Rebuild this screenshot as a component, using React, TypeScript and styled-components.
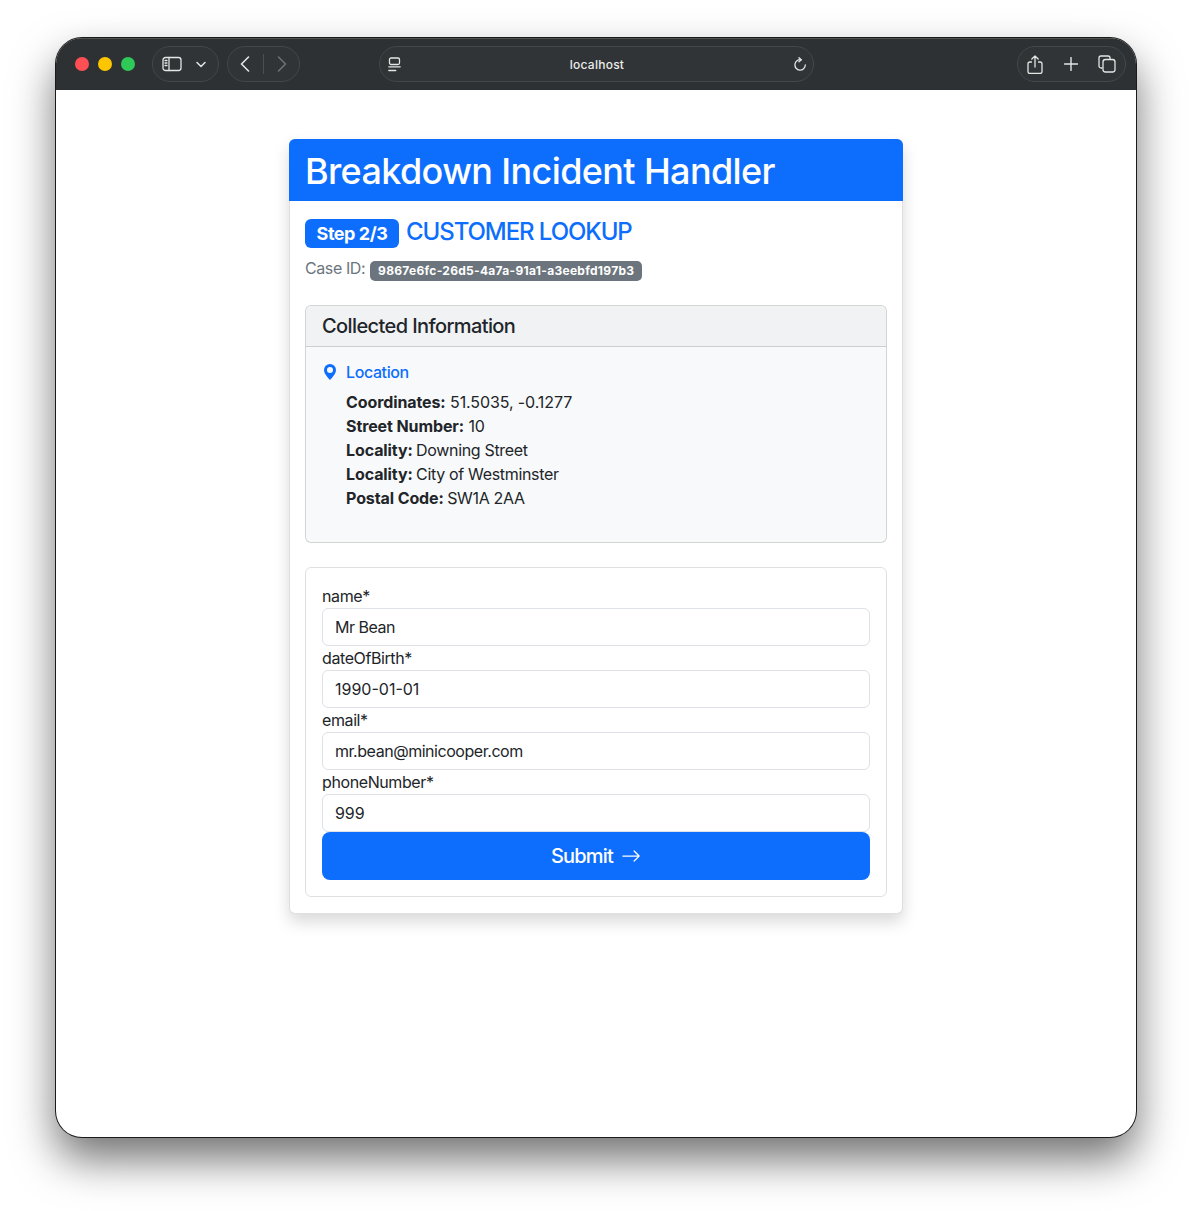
import React from "react";
import styled, { createGlobalStyle } from "styled-components";
import { BsArrowRight, BsGeoAltFill } from "react-icons/bs";

const Global = createGlobalStyle`
  html, body { margin: 0; padding: 0; background: #fff; overflow: hidden; }
  body { font-family: Inter, "Liberation Sans", sans-serif; color: #212529; font-size: 16px; line-height: 24px; }
  * { box-sizing: border-box; }
`;

const Stage = styled.div`
  width: 1192px;
  height: 1211px;
  padding: 38px 56px 74px;
`;
const Win = styled.div`
  width: 1080px;
  height: 1099px;
  border-radius: 26px;
  overflow: hidden;
  background: #fff;
  box-shadow: 0 0 0 1px #1a1a1a, 0 22px 44px rgba(0, 0, 0, 0.56);
  display: flex;
  flex-direction: column;
`;
const Toolbar = styled.div`
  height: 52px;
  flex: none;
  background: #2d3133;
  display: flex;
  align-items: center;
  padding: 0 10px 0 19px;
  box-shadow: inset 0 1px 0 #50524f;
`;
const Lights = styled.div`
  display: flex;
  gap: 9px;
  margin-right: 17px;
`;
const Light = styled.span<{ $c: string }>`
  width: 14px;
  height: 14px;
  border-radius: 50%;
  background: ${(p) => p.$c};
`;
const Pill = styled.div<{ $w: number; $ml?: number; $mr?: number }>`
  width: ${(p) => p.$w}px;
  height: 36px;
  margin-left: ${(p) => p.$ml ?? 0}px;
  margin-right: ${(p) => p.$mr ?? 0}px;
  border: 1px solid #44484a;
  border-radius: 18px;
  background: #303436;
  display: flex;
  align-items: center;
  flex: none;
`;
const SidebarPill = styled(Pill)`
  padding: 0 12px 0 9px;
  justify-content: space-between;
`;
const NavPill = styled(Pill)`
  padding: 0 12px;
  justify-content: space-between;
`;
const Divider = styled.span`
  width: 1px;
  height: 20px;
  background: #4b4f51;
`;
const AddressPill = styled(Pill)`
  padding: 0 6px 0 8px;
  justify-content: space-between;
`;
const Host = styled.span`
  font-size: 12px;
  font-weight: 500;
  color: #eceded;
  line-height: 16px;
  padding-top: 1px;
  letter-spacing: 0.25px;
`;
const ActionPill = styled(Pill)`
  padding: 0 9px 0 9px;
  justify-content: space-between;
  margin-left: auto;
`;

const Glyph = styled.svg<{ $dim?: boolean }>`
  display: block;
  flex: none;
  fill: none;
  stroke: ${(p) => (p.$dim ? "#6e7173" : "#e4e5e5")};
  stroke-width: 1.3;
  stroke-linecap: round;
  stroke-linejoin: round;
`;

const Content = styled.main`
  flex: 1;
  padding-top: 49px;
  display: flex;
  justify-content: center;
  align-items: flex-start;
`;
const Card = styled.section`
  width: 614px;
  background: #fff;
  border: 1px solid rgba(0, 0, 0, 0.125);
  border-radius: 6px;
  box-shadow: 0 8px 16px rgba(0, 0, 0, 0.15);
`;
const CardHead = styled.header`
  height: 62px;
  margin: -1px -1px 0;
  padding: 11px 16px 0;
  border-radius: 6px 6px 0 0;
  background: #0d6efd;
`;
const Title = styled.h1`
  margin: 0;
  font-size: 36px;
  line-height: 43px;
  font-weight: 500;
  color: #fff;
  letter-spacing: -0.63px;
`;
const CardBody = styled.div`
  padding: 18px 15px 16px 15px;
`;
const StepRow = styled.div`
  display: flex;
  align-items: center;
  gap: 7px;
  height: 29px;
`;
const StepBadge = styled.span`
  height: 29px;
  width: 94px;
  border-radius: 6px;
  background: #0d6efd;
  color: #fff;
  font-size: 18px;
  font-weight: 700;
  line-height: 29px;
  text-align: center;
  letter-spacing: -0.45px;
`;
const StepName = styled.h4`
  margin: 0 0 4px;
  font-size: 24px;
  line-height: 29px;
  font-weight: 500;
  color: #0d6efd;
  letter-spacing: -1.08px;
`;
const CaseRow = styled.div`
  display: flex;
  align-items: flex-start;
  gap: 5px;
  margin-top: 8px;
  height: 49px;
  color: #6c757d;
  line-height: 24px;
`;
const CaseLabel = styled.span`
  letter-spacing: -0.4px;
`;
const CaseBadge = styled.span`
  margin-top: 5px;
  height: 20px;
  width: 272px;
  border-radius: 5px;
  background: #6c757d;
  color: #fff;
  font-size: 12px;
  font-weight: 700;
  line-height: 20px;
  text-align: center;
  white-space: nowrap;
  letter-spacing: 0.29px;
`;
const InfoPanel = styled.section`
  height: 238px;
  border: 1px solid rgba(0, 0, 0, 0.15);
  border-radius: 6px;
  background: #f8f9fa;
  overflow: hidden;
`;
const InfoHead = styled.div`
  height: 41px;
  padding: 8px 16px;
  background: #f1f2f4;
  border-bottom: 1px solid rgba(0, 0, 0, 0.15);
  font-size: 20px;
  line-height: 24px;
  font-weight: 500;
  letter-spacing: -0.6px;
`;
const InfoBody = styled.div`
  padding: 16px;
`;
const SectionLabel = styled.div`
  display: flex;
  align-items: center;
  height: 18px;
  margin-bottom: 9px;
  color: #0d6efd;
  font-weight: 500;
  letter-spacing: -0.4px;
  svg { margin: 0 8px 0 0; flex: none; }
`;
const Facts = styled.ul`
  list-style: none;
  margin: 0;
  padding: 0 0 0 24px;
`;
const Fact = styled.li`
  line-height: 24px;
  letter-spacing: -0.1px;
  b { font-weight: 700; }
`;
const Word = styled.span`
  margin-left: -1px;
  letter-spacing: -0.33px;
`;
const FormPanel = styled.form`
  margin-top: 24px;
  border: 1px solid rgba(0, 0, 0, 0.125);
  border-radius: 6px;
  padding: 16px;
`;
const Label = styled.label`
  display: block;
  line-height: 24px;
  letter-spacing: -0.4px;
`;
const Input = styled.input<{ $track: number }>`
  display: block;
  width: 100%;
  height: 38px;
  padding: 6px 12px;
  border: 1px solid #dee2e6;
  border-radius: 6px;
  background: #fff;
  color: #212529;
  font: 400 16px/24px Inter, "Liberation Sans", sans-serif;
  letter-spacing: ${(p) => p.$track}px;
  outline: none;
`;
const Submit = styled.button`
  display: flex;
  width: 100%;
  height: 48px;
  align-items: center;
  justify-content: center;
  gap: 8px;
  border: 0;
  border-radius: 8px;
  background: #0d6efd;
  color: #fff;
  font: 500 20px/24px Inter, "Liberation Sans", sans-serif;
  letter-spacing: -0.8px;
`;

const fields: [string, string, number][] = [
  ["name*", "Mr Bean", -0.5],
  ["dateOfBirth*", "1990-01-01", 0],
  ["email*", "mr.bean@minicooper.com", -0.46],
  ["phoneNumber*", "999", -0.1],
];

export default function App() {
  return (
    <Stage>
      <Global />
      <Win>
        <Toolbar>
          <Lights>
            <Light $c="#fe4f54" />
            <Light $c="#fdc600" />
            <Light $c="#2fc957" />
          </Lights>
          <SidebarPill $w={67}>
            <Glyph width="20" height="16" viewBox="0 0 20 16">
              <rect x="1" y="1.500" width="18" height="13" rx="2.500" />
              <path d="M7 1.500v13" />
              <path d="M3 4.500h2M3 7h2M3 9.500h2" />
            </Glyph>
            <Glyph width="10" height="7" viewBox="0 0 10 7">
              <path d="M1 1.500l4 4 4-4" strokeWidth="1.5" />
            </Glyph>
          </SidebarPill>
          <NavPill $w={73} $ml={8} $mr={79}>
            <Glyph width="10" height="16" viewBox="0 0 10 16">
              <path d="M8.500 1l-7 7 7 7" strokeWidth="1.6" />
            </Glyph>
            <Divider />
            <Glyph $dim width="10" height="16" viewBox="0 0 10 16">
              <path d="M1.500 1l7 7-7 7" strokeWidth="1.6" />
            </Glyph>
          </NavPill>
          <AddressPill $w={435}>
            <Glyph width="13" height="15" viewBox="0 0 13 15">
              <rect x="1.500" y="1" width="10" height="6.500" rx="1.500" />
              <path d="M.8 9.800h11.400M.8 13.500h7" />
            </Glyph>
            <Host>localhost</Host>
            <Glyph width="14" height="15" viewBox="0 0 14 15">
              <path d="M8 2.800A5.200 5.200 0 1 0 12.300 8" />
              <path d="M6 .8l2.300 2-2.300 2" />
            </Glyph>
          </AddressPill>
          <ActionPill $w={109}>
            <Glyph width="16" height="19" viewBox="0 0 16 19">
              <path d="M4.500 7H3a2 2 0 0 0-2 2v7.500a2 2 0 0 0 2 2h10a2 2 0 0 0 2-2V9a2 2 0 0 0-2-2h-1.500" />
              <path d="M8 12V1M4.800 4L8 1l3.200 3" />
            </Glyph>
            <Glyph width="14" height="14" viewBox="0 0 14 14">
              <path d="M7 .5v13M.5 7h13" strokeWidth="1.4" />
            </Glyph>
            <Glyph width="18" height="18" viewBox="0 0 18 18">
              <path d="M4 13H3a2 2 0 0 1-2-2V3a2 2 0 0 1 2-2h7a2 2 0 0 1 2 2v1" />
              <rect x="5" y="4.500" width="12" height="12.500" rx="2.500" />
            </Glyph>
          </ActionPill>
        </Toolbar>
        <Content>
          <Card>
            <CardHead>
              <Title>Breakdown Incident Handler</Title>
            </CardHead>
            <CardBody>
              <StepRow>
                <StepBadge>Step 2/3</StepBadge>
                <StepName>CUSTOMER LOOKUP</StepName>
              </StepRow>
              <CaseRow>
                <CaseLabel>Case ID:</CaseLabel>
                <CaseBadge>9867e6fc-26d5-4a7a-91a1-a3eebfd197b3</CaseBadge>
              </CaseRow>
              <InfoPanel>
                <InfoHead>Collected Information</InfoHead>
                <InfoBody>
                  <SectionLabel>
                    <BsGeoAltFill size={16} />
                    Location
                  </SectionLabel>
                  <Facts>
                    <Fact><b>Coordinates:</b> 51.5035, -0.1277</Fact>
                    <Fact><b>Street Number:</b> 10</Fact>
                    <Fact><b>Locality:</b> <Word>Downing Street</Word></Fact>
                    <Fact><b>Locality:</b> <Word>City of Westminster</Word></Fact>
                    <Fact><b>Postal Code:</b> <Word>SW1A 2AA</Word></Fact>
                  </Facts>
                </InfoBody>
              </InfoPanel>
              <FormPanel onSubmit={(e) => e.preventDefault()}>
                {fields.map(([label, value, track]) => (
                  <React.Fragment key={label}>
                    <Label>{label}</Label>
                    <Input defaultValue={value} $track={track} />
                  </React.Fragment>
                ))}
                <Submit type="submit">
                  Submit
                  <BsArrowRight size={20} />
                </Submit>
              </FormPanel>
            </CardBody>
          </Card>
        </Content>
      </Win>
    </Stage>
  );
}
